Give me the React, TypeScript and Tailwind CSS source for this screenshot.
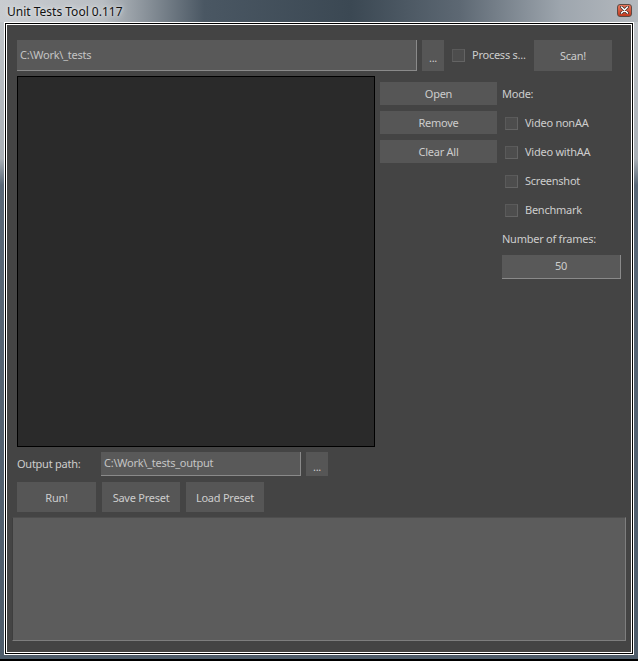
import React from "react";

const font = { fontFamily: '"Noto Sans", "Open Sans", sans-serif' };

function Btn({ label, className }: { label: string; className: string }) {
  return (
    <div
      className={
        "flex items-center justify-center bg-[#565656] text-[#cdcdcd] text-[11px] tracking-[-0.25px] leading-none " +
        className
      }
    >
      {label}
    </div>
  );
}

function Check() {
  return (
    <div className="w-[13px] h-[13px] bg-[#4d4d4d] border border-[#646464] border-t-[#5a5a5a] border-l-[#5a5a5a]" />
  );
}

export default function App() {
  return (
    <div
      className="w-[638px] h-[661px] flex flex-col bg-[linear-gradient(180deg,#c4c8cc_0%,#aab0b6_24%,#5a6877_28%,#4e5c6a_100%)] relative overflow-hidden"
      style={font}
    >
      {/* title bar */}
      <div className="h-[22px] flex items-center justify-between bg-[linear-gradient(90deg,#c9ccd0_0%,#b9bec3_16%,#4a5763_32%,#3b4853_55%,#5d6873_72%,#9ea6ae_88%,#b4b9be_100%)] shrink-0">
        <div className="pl-[7px] text-[12px] text-[#121212] leading-none [text-shadow:0_0_6px_#e8eaec,0_0_3px_#e8eaec] pt-[1px]">
          Unit Tests Tool 0.117
        </div>
        <div className="mr-[6px] mt-[-2px] w-[15px] h-[13px] rounded-[3px] border border-[#5b4a44] bg-gradient-to-b from-[#e8775c] to-[#c03a1e] flex items-center justify-center">
          <svg width="9" height="8" viewBox="0 0 9 8">
            <path d="M1.5 1 L7.5 7 M7.5 1 L1.5 7" stroke="#3a2a26" strokeWidth="3" strokeLinecap="round" />
            <path d="M1.5 1 L7.5 7 M7.5 1 L1.5 7" stroke="#ffffff" strokeWidth="1.6" strokeLinecap="round" />
          </svg>
        </div>
      </div>

      {/* frame */}
      <div className="flex-1 mx-[4px] flex flex-col border border-white">
        <div className="flex-1 flex flex-col border border-black">
          <div className="flex-1 flex flex-col border border-white">
            <div className="flex-1 flex flex-col bg-[#444444] text-[11px] tracking-[-0.25px]">
              <div className="px-[10px] pt-[15px] flex flex-col">
                {/* row 1 */}
                <div className="flex items-center h-[31px]">
                  <div className="w-[400px] h-[31px] bg-[#595959] border-r border-b border-[#8a8a8a] flex items-center pl-[3px] pt-[1px] text-[#c4c4c4]">
                    C:\Work\_tests
                  </div>
                  <Btn label="..." className="ml-[5px] w-[22px] h-[31px] pt-[4px]" />
                  <div className="ml-[8px]">
                    <Check />
                  </div>
                  <div className="ml-[7px] w-[57px] text-[#cdcdcd] whitespace-nowrap">
                    Process s...
                  </div>
                  <Btn label="Scan!" className="ml-[5px] w-[78px] h-[31px]" />
                </div>

                {/* row 2 */}
                <div className="flex mt-[5px]">
                  <div className="w-[358px] h-[371px] bg-[#2a2a2a] border border-black" />
                  <div className="ml-[5px] w-[117px] pt-[6px] flex flex-col gap-[6px]">
                    <Btn label="Open" className="h-[23px]" />
                    <Btn label="Remove" className="h-[23px]" />
                    <Btn label="Clear All" className="h-[23px]" />
                  </div>
                  <div className="ml-[5px] w-[119px] pt-[4px] flex flex-col text-[#cdcdcd]">
                    <div className="h-[29px] flex items-center">Mode:</div>
                    {["Video nonAA", "Video withAA", "Screenshot", "Benchmark"].map((t) => (
                      <div key={t} className="h-[29px] flex items-center pl-[3px] gap-[7px]">
                        <Check />
                        <span>{t}</span>
                      </div>
                    ))}
                    <div className="h-[29px] flex items-center whitespace-nowrap">Number of frames:</div>
                    <div className="mt-[1px] h-[24px] bg-[#595959] border-r border-b border-[#8a8a8a] flex items-center justify-center text-[#cdcdcd]">
                      50
                    </div>
                  </div>
                </div>

                {/* row 3 */}
                <div className="flex items-center mt-[5px] h-[24px]">
                  <div className="w-[84px] text-[#cdcdcd]">Output path:</div>
                  <div className="w-[200px] h-[24px] bg-[#595959] border-r border-b border-[#8a8a8a] flex items-center pl-[3px] text-[#c4c4c4]">
                    C:\Work\_tests_output
                  </div>
                  <Btn label="..." className="ml-[5px] w-[22px] h-[24px] pt-[4px]" />
                </div>

                {/* row 4 */}
                <div className="flex mt-[6px] h-[30px] gap-[6px]">
                  <Btn label="Run!" className="w-[79px] h-[30px]" />
                  <Btn label="Save Preset" className="w-[78px] h-[30px]" />
                  <Btn label="Load Preset" className="w-[78px] h-[30px]" />
                </div>
              </div>

              {/* log */}
              <div className="mx-[5px] mt-[5px] h-[124px] bg-[#5c5c5c] border-r border-b border-[#7e7e7e] border-l-[#3e3e3e] border-t-[#4e4e4e] border-l border-t" />
            </div>
          </div>
        </div>
      </div>
      <div className="h-[4px] shrink-0" />
      <div className="h-[2px] bg-black shrink-0" />
    </div>
  );
}
